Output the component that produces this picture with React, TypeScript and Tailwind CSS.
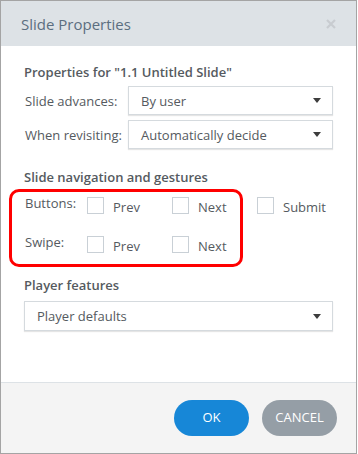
import React from "react";

const font = { fontFamily: '"Open Sans", "Noto Sans", sans-serif' };

function Select({ value, className }: { value: string; className: string }) {
  return (
    <div
      className={`flex items-center justify-between h-[29px] border border-[#d5dade] bg-white shadow-[0_1px_1px_rgba(0,0,0,0.10)] pl-[12px] pr-[11px] ${className}`}
    >
      <span className="text-[13px] leading-[18px] text-[#555a60] whitespace-nowrap">{value}</span>
      <svg width="8" height="5" viewBox="0 0 8 5">
        <path d="M0 0 L8 0 L4 5 Z" fill="#3d3d3d" />
      </svg>
    </div>
  );
}

function Check({ label }: { label: string }) {
  return (
    <div className="flex items-center gap-[9px] w-[85px]">
      <div className="w-[17px] h-[17px] border border-[#c9d0d6] bg-white shrink-0" />
      <span className="text-[13px] leading-[18px] text-[#555a60] mt-[3px] whitespace-nowrap">{label}</span>
    </div>
  );
}

export default function App() {
  return (
    <div style={font} className="w-[357px] h-[454px] border border-[#a4a4a4] flex flex-col bg-white">
      <div className="h-[45px] bg-[#dde2e6] flex items-center justify-between pl-[20px] pr-[19px] shrink-0">
        <span className="text-[15px] text-[#5b6e80] leading-[20px]">Slide Properties</span>
        <svg width="10" height="10" viewBox="0 0 10 10" className="mr-[1px]">
          <path d="M1 1 L9 9 M9 1 L1 9" stroke="#c8ccd0" strokeWidth="2.2" />
        </svg>
      </div>
      <div className="flex-1 relative pl-[23px] pt-[17px] text-[#555a60]">
        <div className="text-[13px] leading-[18px] font-semibold text-[#555a60] whitespace-nowrap">
          Properties for "1.1 Untitled Slide"
        </div>
        <div className="flex items-center mt-[5px]">
          <span className="w-[104px] text-[13px] leading-[18px] pl-[1px] whitespace-nowrap">Slide advances:</span>
          <Select value="By user" className="w-[205px]" />
        </div>
        <div className="flex items-center mt-[5px]">
          <span className="w-[104px] text-[13px] leading-[18px] pl-[1px] whitespace-nowrap">When revisiting:</span>
          <Select value="Automatically decide" className="w-[205px]" />
        </div>
        <div className="mt-[19px] text-[13px] leading-[18px] font-semibold whitespace-nowrap">Slide navigation and gestures</div>
        <div className="mt-[9px] pl-[1px] flex flex-col gap-[18px]">
          <div className="flex items-start">
            <span className="w-[62px] text-[13px] leading-[18px] -mt-[1px]">Buttons:</span>
            <Check label="Prev" />
            <Check label="Next" />
            <Check label="Submit" />
          </div>
          <div className="flex items-start">
            <span className="w-[62px] text-[13px] leading-[18px] -mt-[1px]">Swipe:</span>
            <Check label="Prev" />
            <Check label="Next" />
          </div>
        </div>
        <div className="mt-[21px] text-[13px] leading-[18px] font-semibold whitespace-nowrap">Player features</div>
        <Select value="Player defaults" className="w-[309px] h-[30px] mt-[7px]" />
        <div className="absolute left-[8px] top-[143px] w-[234px] h-[78px] border-[3px] border-[#ff0000] rounded-[10px] pointer-events-none" />
      </div>
      <div className="h-[71px] shrink-0 border-t border-[#dde2e6] bg-[#f4f4f4] flex items-center justify-end gap-[13px] pr-[19px]">
        <button className="w-[75px] h-[36px] rounded-full bg-[#1787d7] text-white text-[13px]">OK</button>
        <button className="w-[75px] h-[36px] rounded-full bg-[#959ea6] text-white text-[13px]">CANCEL</button>
      </div>
    </div>
  );
}
